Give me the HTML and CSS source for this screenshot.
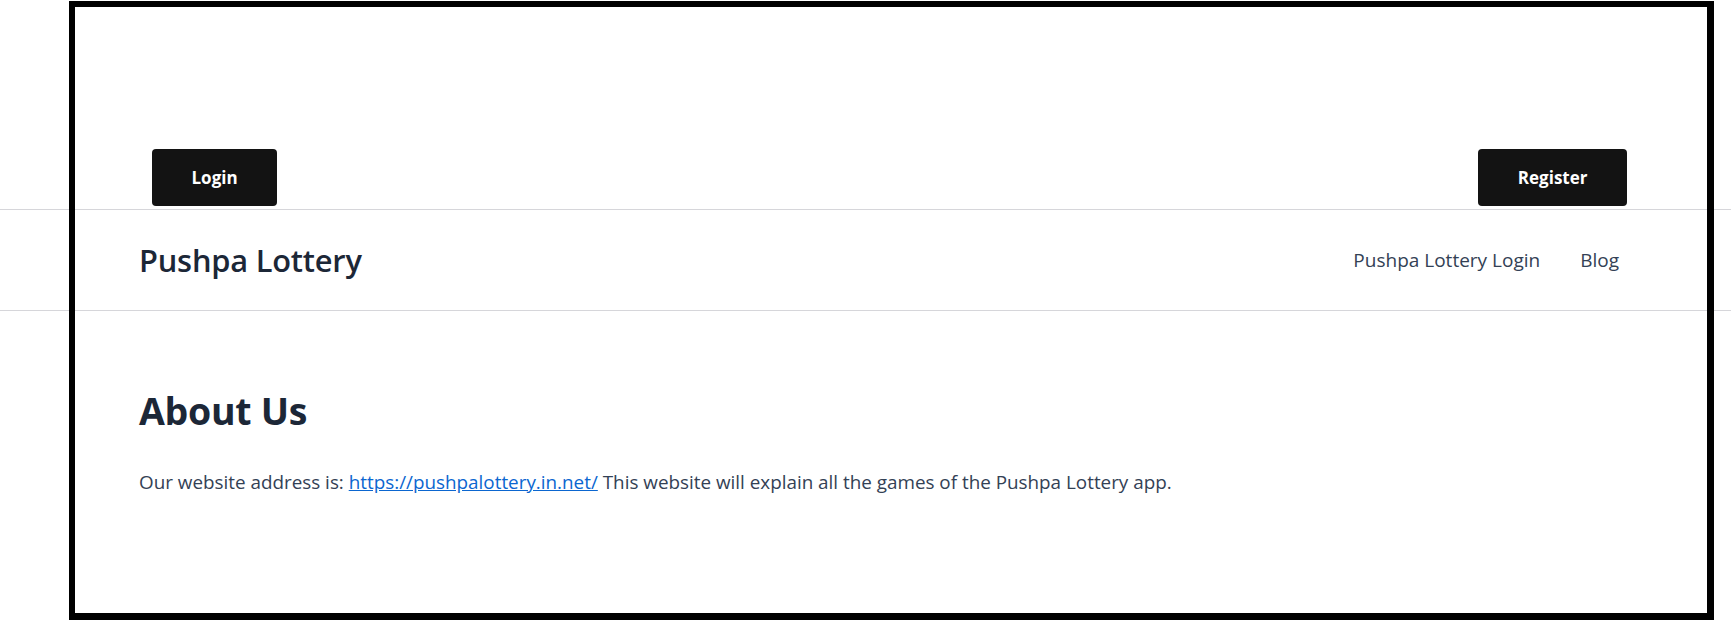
FILE: index.html
```html
<!DOCTYPE html>
<html lang="en">
<head>
  <meta charset="UTF-8">
  <meta name="viewport" content="width=device-width, initial-scale=1.0">
  <title>About Us - Pushpa Lottery</title>
  <link rel="stylesheet" href="styles.css">
</head>
<body>
  <!-- annotation frame drawn over the page -->
  <div class="frame"></div>

  <div class="topbar">
    <div class="container top-actions">
      <a class="btn" href="#">Login</a>
      <a class="btn" href="#">Register</a>
    </div>
  </div>

  <header class="site-header">
    <div class="container header-inner">
      <a class="site-title" href="#">Pushpa Lottery</a>
      <nav class="main-nav">
        <a href="#">Pushpa Lottery Login</a>
        <a href="#">Blog</a>
      </nav>
    </div>
  </header>

  <main class="container content">
    <h1>About Us</h1>
    <p>Our website address is: <a href="#">https://pushpalottery.in.net/</a> This website will explain all the games of the Pushpa Lottery app.</p>
  </main>
</body>
</html>
```

FILE: styles.css
```css
body {
  margin: 0;
  padding: 0;
  background-color: #fff;
  color: #1e293b;
  font-family: "Open Sans", "Noto Sans", Arial, sans-serif;
}

.container {
  margin: 0 104px 0 139px;
}

.frame {
  position: absolute;
  left: 69px;
  top: 1px;
  width: 1645px;
  height: 619px;
  box-sizing: border-box;
  border: 6px solid #000;
  border-right-width: 7px;
  border-bottom-width: 7px;
  pointer-events: none;
  z-index: 10;
}

.topbar {
  padding-top: 149px;
  padding-bottom: 3px;
}

.top-actions {
  display: flex;
  justify-content: space-between;
  padding-left: 13px;
}

.btn {
  display: inline-flex;
  align-items: center;
  justify-content: center;
  height: 57px;
  padding: 0 39.5px;
  background-color: #131313;
  color: #fff;
  font-size: 17px;
  font-weight: 700;
  border-radius: 4px;
  text-decoration: none;
}

.site-header {
  border-top: 1px solid #d6d6da;
  border-bottom: 1px solid #d6d6da;
}

.header-inner {
  display: flex;
  align-items: center;
  justify-content: space-between;
  height: 100px;
}

.site-title {
  color: #1c2737;
  font-size: 30.8px;
  font-weight: 600;
  line-height: 1.2;
  letter-spacing: -0.2px;
  text-decoration: none;
}

.main-nav {
  display: flex;
  gap: 40px;
  padding-right: 8px;
}

.main-nav a {
  color: #334155;
  font-size: 19px;
  text-decoration: none;
}

.content {
  padding-top: 77px;
}

.content h1 {
  margin: 0;
  color: #1c2737;
  font-size: 37.5px;
  font-weight: 700;
  line-height: 1.2;
  letter-spacing: -0.3px;
}

.content p {
  margin: 34px 0 0;
  color: #334155;
  font-size: 18.85px;
  line-height: 1.6;
}

.content p a {
  color: #0b66d0;
}
```
